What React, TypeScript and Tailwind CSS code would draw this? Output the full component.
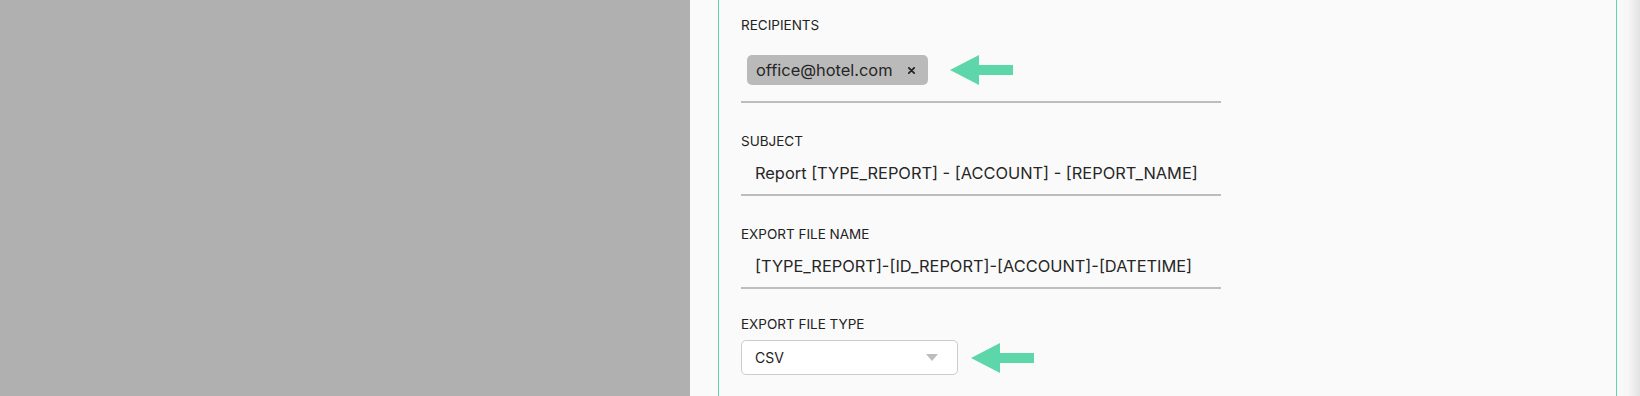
import React from "react";

function Arrow() {
  return (
    <svg width="63" height="30" viewBox="0 0 63 30" className="shrink-0">
      <polygon points="0,15 29,0 29,10 63,10 63,20 29,20 29,30" fill="#5dd6a9" />
    </svg>
  );
}

function Label({ text }: { text: string }) {
  return <div className="text-[13.5px] leading-4 text-[#222]">{text}</div>;
}

function TextField({ value }: { value: string }) {
  return (
    <div className="w-[480px] border-b-2 border-[#bdbdbd] pl-[14px] pt-[14px] pb-[11px] text-[16.4px] leading-5 text-[#262626]">
      {value}
    </div>
  );
}

export default function App() {
  return (
    <div className="flex w-[1640px] h-[396px] overflow-hidden" style={{ fontFamily: "Inter, 'Noto Sans', sans-serif" }}>
      <div className="w-[690px] shrink-0 bg-[#b0b0b0]" />
      <div className="flex-1 flex bg-[#fafafa] pl-[28px]">
        <div className="w-[899px] shrink-0 border-l border-r border-[#5dd6a9] pl-[22px] pt-[17px]">
          <Label text="RECIPIENTS" />
          <div className="w-[480px] border-b-2 border-[#bdbdbd] pt-[22px] pb-[16px] pl-[6px]">
            <div className="flex items-center gap-[22px]">
              <div className="flex items-center h-[30px] rounded-[5px] bg-[#bababa] pl-[9px] pr-[13px] text-[16.4px] text-[#262626]">
                <span>office@hotel.com</span>
                <svg width="7" height="7" viewBox="0 0 7 7" className="ml-[15px]">
                  <path d="M0.8 0.8 L6.2 6.2 M6.2 0.8 L0.8 6.2" stroke="#222" strokeWidth="1.7" strokeLinecap="round" />
                </svg>
              </div>
              <Arrow />
            </div>
          </div>

          <div className="pt-[30px]">
            <Label text="SUBJECT" />
            <TextField value="Report [TYPE_REPORT] - [ACCOUNT] - [REPORT_NAME]" />
          </div>

          <div className="pt-[30px]">
            <Label text="EXPORT FILE NAME" />
            <TextField value="[TYPE_REPORT]-[ID_REPORT]-[ACCOUNT]-[DATETIME]" />
          </div>

          <div className="pt-[27px]">
            <Label text="EXPORT FILE TYPE" />
            <div className="flex items-center gap-[13px] mt-[8px]">
              <div className="flex items-center justify-between w-[217px] h-[35px] rounded-[5px] border border-[#cccccc] bg-white pl-[13px] pr-[19px] text-[14px] text-[#222]">
                <span>CSV</span>
                <svg width="12" height="7" viewBox="0 0 12 7">
                  <polygon points="0,0 12,0 6,7" fill="#bdbdbd" />
                </svg>
              </div>
              <Arrow />
            </div>
          </div>
        </div>
        <div className="flex-1 bg-gradient-to-r from-[#fafafa] via-[#f6f6f6] to-[#e2e2e2]" />
      </div>
    </div>
  );
}
